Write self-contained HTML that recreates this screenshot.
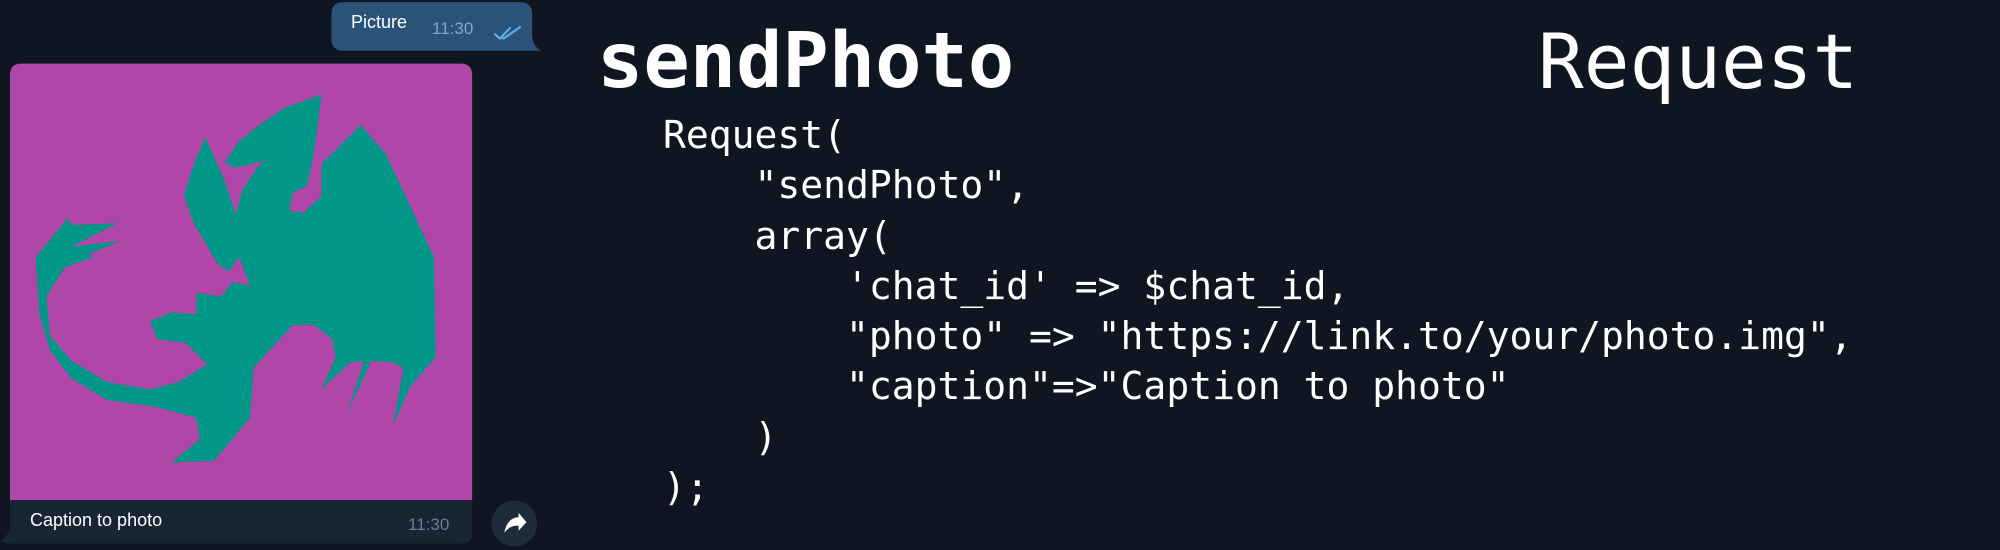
<!DOCTYPE html>
<html><head><meta charset="utf-8"><style>
html,body{margin:0;padding:0;background:#0f1621;width:2000px;height:550px;overflow:hidden;position:relative;font-family:"Liberation Sans",sans-serif}
.abs{position:absolute}
.code{position:absolute;font-family:"DejaVu Sans Mono","Liberation Mono",monospace;color:#fff;white-space:pre;margin:0}
</style></head><body>
<svg class="abs" style="left:0;top:0" width="560" height="550" viewBox="0 0 1568 1540">
  <path d="M928,40 Q928,6 962,6 L1456,6 Q1490,6 1490,40 L1490,100 Q1492,130 1515,142 L962,142 Q928,142 928,108 Z" fill="#2b5278"/>
  <path d="M28,210 Q28,178 60,178 L1290,178 Q1322,178 1322,210 L1322,1494 Q1322,1522 1290,1522 L28,1522 Q10,1520 0,1514 Q20,1504 28,1480 Z" fill="#182533"/>
  <path d="M28,210 Q28,178 60,178 L1290,178 Q1322,178 1322,210 L1322,1400 L28,1400 Z" fill="#b047a8"/>
  <path fill="#009688" d="M900,460 L1010,350 L1080,430 L1215,720 L1220,1000 L1150,1080 L1100,1190 L1130,1030 L1100,1015 L1040,1010 L970,1160 L1020,1010 L980,1015 L900,1090 L940,1000 L930,950 L880,910 L820,910 L710,1030 L700,1170 L600,1290 L480,1295 L560,1230 L550,1170 L440,1140 L300,1120 L200,1060 L140,980 L110,880 L100,720 L190,610 L200,630 L330,625 L200,690 L340,675 L250,710 L260,720 L180,750 L130,830 L140,940 L200,1010 L300,1070 L420,1090 L500,1070 L580,1020 L520,960 L440,950 L420,900 L480,875 L550,880 L550,820 L620,830 L650,790 L700,800 L670,720 L640,760 L610,740 L540,620 L515,545 L550,440 L575,385 L600,440 L630,510 L660,600 L680,530 L720,470 L740,450 L660,470 L630,455 L665,400 L700,370 L740,340 L800,300 L900,265 L890,350 L880,420 L860,520 L820,540 L810,590 L850,595 L900,550 Z"/>
  <circle cx="1440" cy="1466" r="64" fill="#1e2c3a"/>
  <path d="M1412,1492 Q1420,1450 1452,1448 L1452,1436 L1474,1462 L1452,1486 L1452,1472 Q1428,1470 1412,1492 Z" fill="#fff"/>
  <path d="M1386,96 L1400,108 L1428,78 M1404,104 L1410,108 L1456,76" stroke="#62aee8" stroke-width="6" fill="none" stroke-linecap="round"/>
</svg>
<div class="abs" style="left:351px;top:12px;font-size:18px;color:#fff">Picture</div>
<div class="abs" style="left:432px;top:19px;font-size:17px;color:#7da8d3">11:30</div>
<div class="abs" style="left:30px;top:510px;font-size:18px;color:#fff">Caption to photo</div>
<div class="abs" style="left:408px;top:515px;font-size:17px;color:#6d7f8f">11:30</div>
<div class="code" style="left:597px;top:17px;font-size:77px;font-weight:bold;line-height:90px">sendPhoto</div>
<div class="code" style="left:1538px;top:17px;font-size:76px;line-height:90px">Request</div>
<pre class="code" style="left:663px;top:110px;font-size:38px;line-height:50.3px">Request(
    "sendPhoto",
    array(
        'chat_id' =&gt; $chat_id,
        "photo" =&gt; "https://link.to/your/photo.img",
        "caption"=&gt;"Caption to photo"
    )
);</pre>
</body></html>
